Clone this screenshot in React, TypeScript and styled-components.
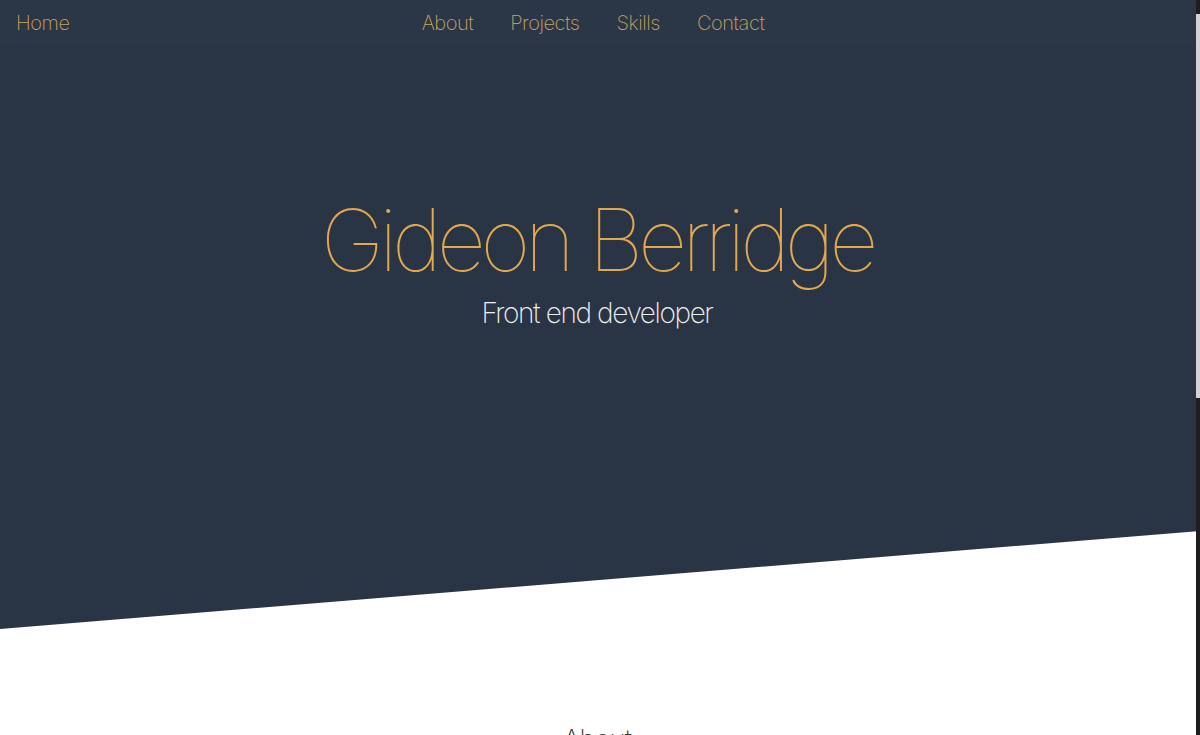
import React from "react";
import styled, { createGlobalStyle } from "styled-components";

const Global = createGlobalStyle`
  html, body { margin: 0; padding: 0; background: #ffffff; }
  body { font-family: "Inter", sans-serif; }
`;

const Page = styled.div`
  min-height: 1360px;
  background: #ffffff;
`;

const Hero = styled.header`
  background: #293445;
  height: 629px;
  clip-path: polygon(0 0, 100% 0, 100% 531px, 0 629px);
  display: flex;
  flex-direction: column;
`;

const Nav = styled.nav`
  display: grid;
  grid-template-columns: 1fr auto 1fr;
  align-items: center;
  height: 46px;
  padding: 0 30px 0 16px;
  background: #2b3647;
`;

const NavLink = styled.a`
  font-family: "Inter", sans-serif;
  font-weight: 200;
  font-size: 20px;
  color: #c9a55e;
  text-decoration: none;
  letter-spacing: -0.45px;
`;

const Links = styled.div`
  display: flex;
  gap: 37px;
`;

const Intro = styled.div`
  display: flex;
  flex-direction: column;
  align-items: center;
  padding: 142px 6px 0 0;
`;

const Name = styled.h1`
  margin: 0;
  font-family: "Inter", sans-serif;
  font-weight: 100;
  font-size: 86px;
  line-height: 104px;
  color: #e3a84d;
  letter-spacing: -5.4px;
`;

const Role = styled.h2`
  margin: 0;
  font-family: "Inter", sans-serif;
  font-weight: 200;
  font-size: 28px;
  line-height: 42px;
  color: #eeeeee;
  letter-spacing: -1.4px;
`;

const Section = styled.section`
  display: flex;
  justify-content: center;
  padding: 94px 6px 0 0;
`;

const Heading = styled.h2`
  margin: 0;
  font-family: "Inter", sans-serif;
  font-weight: 200;
  font-size: 27px;
  color: #3a3a3a;
  letter-spacing: -0.8px;
`;

const ScrollTrack = styled.div`
  position: fixed;
  top: 0;
  right: 0;
  width: 4px;
  height: 100vh;
  background: #1e1e1e;
  display: flex;
  flex-direction: column;
  padding-top: 14px;
  box-sizing: border-box;
`;

const ScrollThumb = styled.div`
  height: 384px;
  background: #d4d4d4;
`;

export default function App() {
  return (
    <Page>
      <Global />
      <Hero>
        <Nav>
          <NavLink href="#">Home</NavLink>
          <Links>
            <NavLink href="#">About</NavLink>
            <NavLink href="#">Projects</NavLink>
            <NavLink href="#">Skills</NavLink>
            <NavLink href="#">Contact</NavLink>
          </Links>
          <span />
        </Nav>
        <Intro>
          <Name>Gideon Berridge</Name>
          <Role>Front end developer</Role>
        </Intro>
      </Hero>
      <Section>
        <Heading>About</Heading>
      </Section>
      <ScrollTrack>
        <ScrollThumb />
      </ScrollTrack>
    </Page>
  );
}
